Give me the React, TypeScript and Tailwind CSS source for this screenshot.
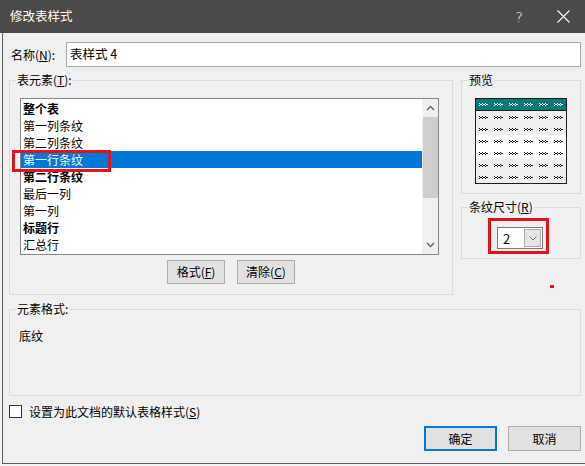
import React from 'react';

const items = [
  { label: '整个表', bold: true },
  { label: '第一列条纹' },
  { label: '第二列条纹' },
  { label: '第一行条纹', selected: true },
  { label: '第二行条纹', bold: true },
  { label: '最后一列' },
  { label: '第一列' },
  { label: '标题行', bold: true },
  { label: '汇总行' },
];

// tiny "»»»" placeholder mark used in the preview grid
function Mark({ light }: { light?: boolean }) {
  const c = light ? '#ffffff' : '#111111';
  const dots: [number, number][] = [];
  for (let i = 0; i < 3; i++) {
    const x = i * 3;
    dots.push([x, 0], [x + 1, 1], [x, 2], [x + 2, 1]);
  }
  return (
    <svg width="9" height="3" viewBox="0 0 9 3" shapeRendering="crispEdges">
      {dots.map(([x, y], i) => (
        <rect key={i} x={x} y={y} width="1" height="1" fill={c} />
      ))}
    </svg>
  );
}

function PreviewRow({ header, shaded }: { header?: boolean; shaded?: boolean }) {
  return (
    <div
      className={
        header
          ? 'flex h-[12px] items-center justify-around bg-[#0b7c75] border-b border-[#1c1c1c]'
          : shaded
          ? 'flex h-[12px] items-center justify-around bg-[#eeeeee]'
          : 'flex h-[12px] items-center justify-around bg-white'
      }
    >
      {Array.from({ length: 6 }).map((_, i) => (
        <Mark key={i} light={header} />
      ))}
    </div>
  );
}

function Chevron({ dir }: { dir: 'up' | 'down' }) {
  return (
    <svg width="9" height="6" viewBox="0 0 9 6">
      <path
        d={dir === 'up' ? 'M1 5 L4.5 1.5 L8 5' : 'M1 1 L4.5 4.5 L8 1'}
        fill="none"
        stroke="#606060"
        strokeWidth="1.3"
      />
    </svg>
  );
}

export default function App() {
  return (
    <div className="w-[585px] h-[466px] bg-[#f4f4f4] flex flex-col font-['Noto_Sans_CJK_SC',sans-serif] text-[12px] text-black overflow-hidden relative">
      {/* title bar */}
      <div className="h-[33px] shrink-0 bg-[#4a4a48] flex items-center text-white">
        <span className="ml-[10px] text-[12.5px] leading-none">修改表样式</span>
        <span className="ml-auto mr-[34px] text-[14px] leading-none font-['DejaVu_Sans',sans-serif] font-light">?</span>
        <svg width="13" height="13" viewBox="0 0 13 13" className="mr-[15px]">
          <path d="M0.5 0.5 L12.5 12.5 M12.5 0.5 L0.5 12.5" stroke="#ffffff" strokeWidth="1.1" />
        </svg>
      </div>

      <div className="flex-1 ml-[2px] mb-[2px] border-l border-b border-[#5c5c5c] bg-[#f0f0f0] flex flex-col pl-[6px] pr-[4px]">
        {/* name */}
        <div className="mt-[9px] h-[25px] flex items-center">
          <span className="ml-[2px] w-[55px] leading-none">
            名称(<u>N</u>):
          </span>
          <div className="flex-1 h-[25px] bg-white border border-[#a9a9a9] flex items-center pl-[3px] text-[12.5px]">
            表样式 4
          </div>
        </div>

        <div className="mt-[5px] flex gap-[8px]">
          {/* table elements */}
          <fieldset className="w-[444px] border border-[#dcdcdc] pl-[6px] pt-[10px] pb-[10px]">
            <legend className="px-[1px] leading-[16px]">
              表元素(<u>T</u>):
            </legend>
            <div className="ml-[4px] w-[419px] h-[157px] bg-white border border-[#828790] flex">
              <div className="flex-1 pt-[1px]">
                {items.map((it) => (
                  <div
                    key={it.label}
                    className={
                      it.selected
                        ? 'h-[17px] leading-[17px] pl-[2px] bg-[#0078d7] text-white'
                        : it.bold
                        ? 'h-[17px] leading-[17px] pl-[2px] font-bold'
                        : 'h-[17px] leading-[17px] pl-[2px]'
                    }
                  >
                    {it.label}
                  </div>
                ))}
              </div>
              <div className="w-[16px] bg-[#f0f0f0] flex flex-col items-center">
                <div className="h-[18px] flex items-center justify-center">
                  <Chevron dir="up" />
                </div>
                <div className="w-[15px] h-[81px] bg-[#cdcdcd]" />
                <div className="flex-1" />
                <div className="h-[18px] flex items-center justify-center">
                  <Chevron dir="down" />
                </div>
              </div>
            </div>
            <div className="mt-[5px] flex justify-center gap-[12px] pr-[6px]">
              <button className="w-[58px] h-[24px] bg-[#e1e1e1] border border-[#adadad] leading-none">
                格式(<u>F</u>)
              </button>
              <button className="w-[58px] h-[24px] bg-[#e1e1e1] border border-[#adadad] leading-none">
                清除(<u>C</u>)
              </button>
            </div>
          </fieldset>

          <div className="flex flex-col">
            {/* preview */}
            <fieldset className="w-[120px] border border-[#dcdcdc] pl-[6px] pt-[10px] pb-[9px]">
              <legend className="px-[1px] leading-[16px]">预览</legend>
              <div className="ml-[7px] w-[92px] border border-[#1c1c1c]">
                <PreviewRow header />
                <PreviewRow shaded />
                <PreviewRow shaded />
                <PreviewRow />
                <PreviewRow />
                <PreviewRow shaded />
                <PreviewRow shaded />
              </div>
            </fieldset>

            {/* stripe size */}
            <fieldset className="mt-[5px] w-[120px] border border-[#dcdcdc] pl-[6px] pt-[12px] pb-[9px]">
              <legend className="px-[1px] leading-[16px]">
                条纹尺寸(<u>R</u>)
              </legend>
              <div className="ml-[29px] w-[46px] h-[22px] bg-white border border-[#7a7a7a] flex items-center">
                <span className="ml-[5px] text-[13px] leading-none">2</span>
                <div className="ml-auto mr-[1px] w-[17px] h-[18px] bg-[#e5e5e5] border border-[#acacac] flex items-center justify-center">
                  <svg width="8" height="5" viewBox="0 0 8 5">
                    <path d="M0.5 0.5 L4 4 L7.5 0.5" fill="none" stroke="#707070" strokeWidth="1" />
                  </svg>
                </div>
              </div>
            </fieldset>
          </div>
        </div>

        {/* element format */}
        <fieldset className="mt-[6px] h-[95px] w-[572px] border border-[#dcdcdc] pl-[6px] pt-[10px]">
          <legend className="px-[1px] leading-[16px]">元素格式:</legend>
          <div className="ml-[3px] leading-[17px]">底纹</div>
        </fieldset>

        {/* default style checkbox */}
        <div className="mt-[9px] flex items-center">
          <div className="w-[13px] h-[13px] bg-white border border-[#333333]" />
          <span className="ml-[7px] leading-none">
            设置为此文档的默认表格样式(<u>S</u>)
          </span>
        </div>

        <div className="mt-[8px] flex justify-end gap-[11px]">
          <button className="w-[73px] h-[25px] bg-[#e1e1e1] border-2 border-[#0078d7] leading-none">确定</button>
          <button className="w-[73px] h-[25px] bg-[#e1e1e1] border border-[#adadad] leading-none">取消</button>
        </div>
      </div>

      {/* red annotation marks */}
      <div className="absolute left-[12px] top-[150px] w-[99px] h-[22px] border-[3px] border-[#e0151b]" />
      <div className="absolute left-[488px] top-[218px] w-[61px] h-[36px] border-[3px] border-[#e0151b]" />
      <div className="absolute left-[550px] top-[285px] w-[4px] h-[3px] bg-[#e0151b]" />
    </div>
  );
}
